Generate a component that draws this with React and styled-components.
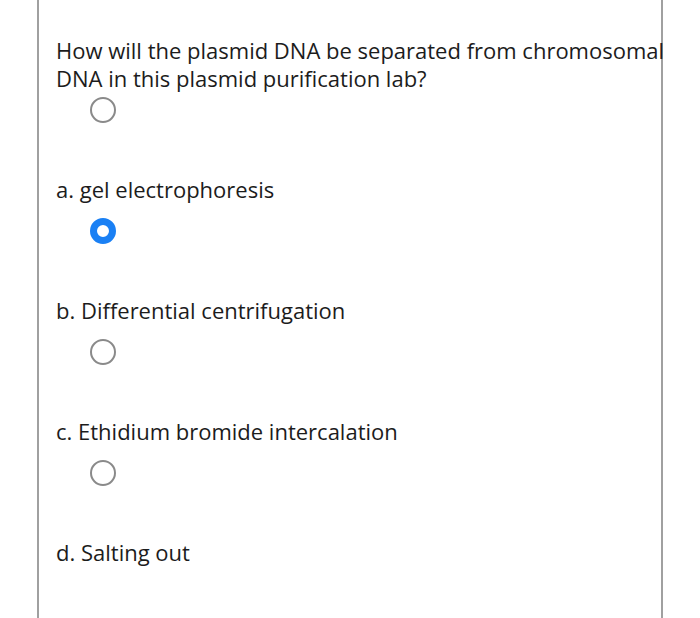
import React from 'react'
import styled, { createGlobalStyle } from 'styled-components';

const GlobalStyle = createGlobalStyle`
  html, body {
    margin: 0;
    padding: 0;
    background: #ffffff;
    overflow: hidden;
  }
`;

const Page = styled.div`
  width: 700px;
  height: 618px;
  background: #ffffff;
  overflow: hidden;
`;

const Card = styled.div`
  margin-left: 37px;
  width: 605px;
  height: 618px;
  box-sizing: content-box;
  border-left: 2px solid #a0a0a0;
  border-right: 2px solid #a0a0a0;
  padding: 36px 0 0 17px;
  font-family: 'Open Sans', 'Liberation Sans', sans-serif;
  color: #1c1c1c;
`;

const Block = styled.div`
  display: flex;
  flex-direction: column;
  margin-top: ${p => p.first ? 0 : 52}px;
`;

const Label = styled.div`
  font-size: 22px;
  line-height: 28px;
  width: ${p => p.wide ? '635px' : 'auto'};
  position: relative;
`;

const Radio = styled.span`
  display: block;
  box-sizing: border-box;
  width: 26px;
  height: 26px;
  border-radius: 50%;
  margin: ${p => p.tight ? 5 : 15}px 0 0 34px;
  border: ${p => p.checked ? '7px solid #1a80f4' : '2px solid #8a8a8a'};
  background: #ffffff;
`;

const options = [
  { label: 'a. gel electrophoresis', checked: true },
  { label: 'b. Differential centrifugation' },
  { label: 'c. Ethidium bromide intercalation' },
  { label: 'd. Salting out', last: true },
];

const App = () => {
  return (
    <Page>
      <GlobalStyle />
      <Card>
        <Block first>
          <Label wide>
            How will the plasmid DNA be separated from chromosomal DNA in this plasmid purification lab?
          </Label>
          <Radio tight />
        </Block>
        {options.map(o => (
          <Block key={o.label}>
            <Label>{o.label}</Label>
            {!o.last && <Radio checked={o.checked} />}
          </Block>
        ))}
      </Card>
    </Page>
  )
}

export default App
